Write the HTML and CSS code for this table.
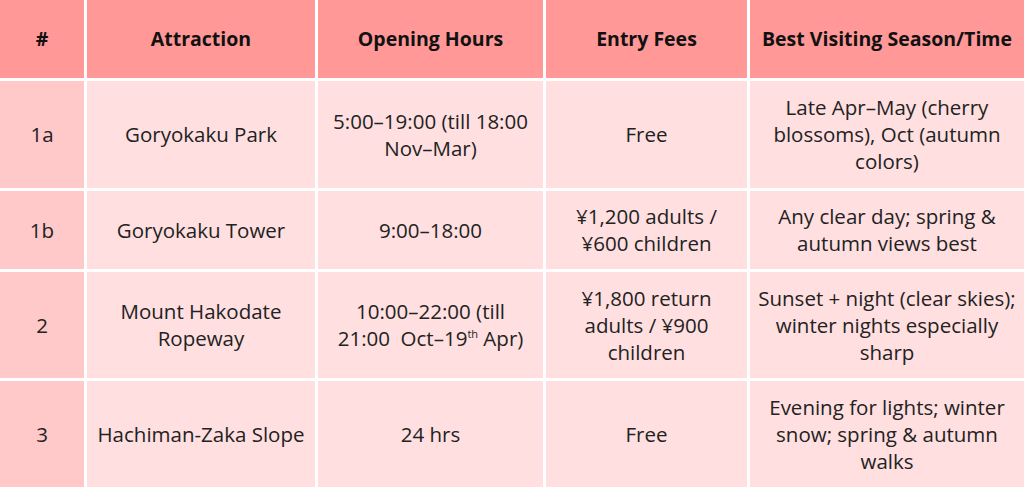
FILE: index.html
```html
<!DOCTYPE html>
<html>
<head>
<meta charset="utf-8">
<link rel="stylesheet" href="styles.css">
</head>
<body>
<div class="table">
  <div class="cell head"><span>#</span></div>
  <div class="cell head"><span>Attraction</span></div>
  <div class="cell head"><span>Opening Hours</span></div>
  <div class="cell head"><span>Entry Fees</span></div>
  <div class="cell head"><span>Best Visiting Season/Time</span></div>

  <div class="cell num"><span>1a</span></div>
  <div class="cell"><span>Goryokaku Park</span></div>
  <div class="cell"><span>5:00–19:00 (till 18:00<br>Nov–Mar)</span></div>
  <div class="cell"><span>Free</span></div>
  <div class="cell"><span>Late Apr–May (cherry<br>blossoms), Oct (autumn<br>colors)</span></div>

  <div class="cell num"><span>1b</span></div>
  <div class="cell"><span>Goryokaku Tower</span></div>
  <div class="cell"><span>9:00–18:00</span></div>
  <div class="cell"><span>¥1,200 adults /<br>¥600 children</span></div>
  <div class="cell"><span>Any clear day; spring &amp;<br>autumn views best</span></div>

  <div class="cell num"><span>2</span></div>
  <div class="cell"><span>Mount Hakodate<br>Ropeway</span></div>
  <div class="cell"><span>10:00–22:00 (till<br>21:00&nbsp; Oct–19<sup>th</sup> Apr)</span></div>
  <div class="cell"><span>¥1,800 return<br>adults / ¥900<br>children</span></div>
  <div class="cell"><span>Sunset + night (clear skies);<br>winter nights especially<br>sharp</span></div>

  <div class="cell num"><span>3</span></div>
  <div class="cell"><span>Hachiman-Zaka Slope</span></div>
  <div class="cell"><span>24 hrs</span></div>
  <div class="cell"><span>Free</span></div>
  <div class="cell"><span>Evening for lights; winter<br>snow; spring &amp; autumn<br>walks</span></div>
</div>
</body>
</html>
```

FILE: styles.css
```css
html, body {
  margin: 0;
  padding: 0;
  background: #ffffff;
}
body {
  font-family: "Open Sans", "Liberation Sans", sans-serif;
  color: #222222;
  overflow: hidden;
}
.table {
  display: grid;
  grid-template-columns: 84px 228px 225px 201px 274px;
  grid-template-rows: 78px 107px 78px 106px 107px;
  gap: 3px;
  background: #ffffff;
  width: 1024px;
}
.cell {
  background: #ffdfe0;
  display: flex;
  align-items: center;
  justify-content: center;
  text-align: center;
  font-size: 20.5px;
  line-height: 27px;
  padding: 0 2px;
  white-space: nowrap;
}
.head {
  background: #ff9897;
  font-weight: 700;
  font-size: 19.5px;
  color: #111;
  padding-bottom: 2px;
}
.num {
  background: #ffc9c9;
}
sup {
  font-size: 11px;
  line-height: 0;
  vertical-align: 8px;
}
```
